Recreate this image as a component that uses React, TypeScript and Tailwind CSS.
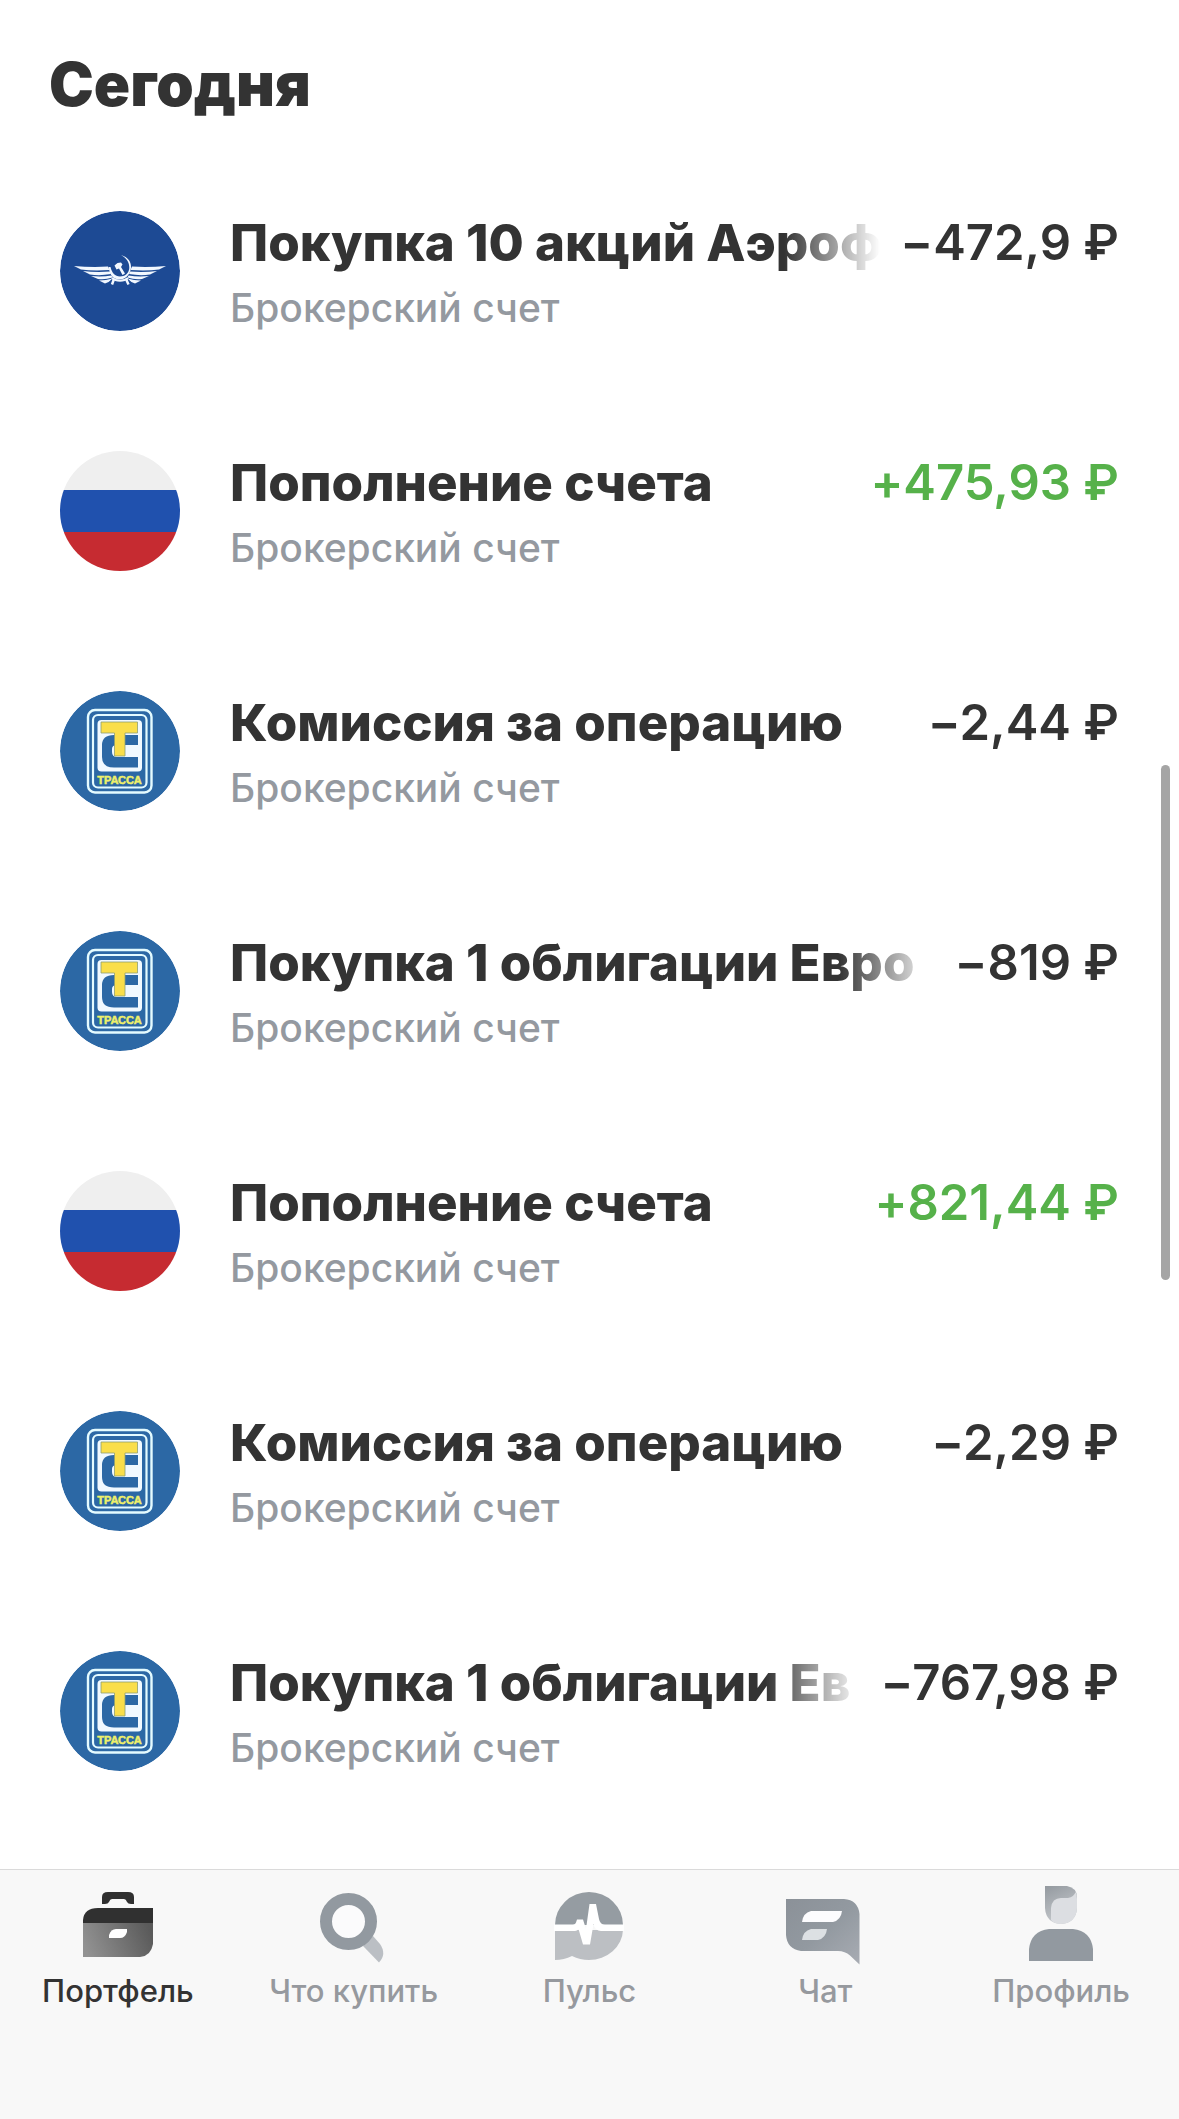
import type { ReactNode } from "react";

type Logo = "aeroflot" | "russia" | "trassa";

interface Operation {
  id: number;
  logo: Logo;
  title: string;
  account: string;
  amount: string;
  income?: boolean;
  faded?: boolean;
}

const operations: Operation[] = [
  { id: 1, logo: "aeroflot", title: "Покупка 10 акций Аэроф", account: "Брокерский счет", amount: "−472,9 ₽", faded: true },
  { id: 2, logo: "russia", title: "Пополнение счета", account: "Брокерский счет", amount: "+475,93 ₽", income: true },
  { id: 3, logo: "trassa", title: "Комиссия за операцию", account: "Брокерский счет", amount: "−2,44 ₽" },
  { id: 4, logo: "trassa", title: "Покупка 1 облигации Евро", account: "Брокерский счет", amount: "−819 ₽", faded: true },
  { id: 5, logo: "russia", title: "Пополнение счета", account: "Брокерский счет", amount: "+821,44 ₽", income: true },
  { id: 6, logo: "trassa", title: "Комиссия за операцию", account: "Брокерский счет", amount: "−2,29 ₽" },
  { id: 7, logo: "trassa", title: "Покупка 1 облигации Ев", account: "Брокерский счет", amount: "−767,98 ₽", faded: true },
];

function AeroflotLogo() {
  return (
    <svg viewBox="0 0 120 120" className="size-full" aria-hidden="true">
      <circle cx="60" cy="60" r="60" fill="#1d4a94" />
      <g fill="#f2f8ff">
        <path d="M14 55Q32 56.500 48 55.500L49.500 59Q33 60 21 58.500Z" />
        <path d="M23 60Q36 61.500 50 60.500L51 63Q40 65 30 63.500Z" />
        <path d="M31 65Q42 66 51.500 64.500L52.500 66.500Q45 69 38 68Z" />
        <path d="M39 69.500Q46 69.500 52.500 67.500Q49 71.500 45 72.500Z" />
        <path d="M106 55Q88 56.500 72 55.500L70.500 59Q87 60 99 58.500Z" />
        <path d="M97 60Q84 61.500 70 60.500L69 63Q80 65 90 63.500Z" />
        <path d="M89 65Q78 66 68.500 64.500L67.500 66.500Q75 69 82 68Z" />
        <path d="M81 69.500Q74 69.500 67.500 67.500Q71 71.500 75 72.500Z" />
        <path d="M61 44C68 46 71.500 51 71 57C70 64 65 68.500 59.500 68.500C54 68.500 50 65 48.500 56L50.500 56C52 62 55 65.500 60 65.500C65 65.500 69 62 69.300 57C69.500 51.500 66.500 47 61 44Z" />
        <path d="M54.500 54.500L57.500 52L61 51.500L62.500 53.500L61 56L65 62.500L62.500 64L59 57.500L56.500 58.500Z" />
      </g>
      <g fill="none" stroke="#f2f8ff">
        <path d="M52 67C56 70.500 64 70.500 68 67" strokeWidth="2" />
        <path d="M54 68L52 73.500M66 68L68.500 73.500" strokeWidth="2.500" />
      </g>
    </svg>
  );
}

function RussiaFlag() {
  return (
    <div className="flex size-full flex-col">
      <div className="h-[39px] bg-[#efefef]" />
      <div className="h-[42px] bg-[#2051ae]" />
      <div className="flex-1 bg-[#c62b31]" />
    </div>
  );
}

function TrassaLogo() {
  return (
    <svg viewBox="0 0 120 120" className="size-full" aria-hidden="true">
      <circle cx="60" cy="60" r="60" fill="#2c68a5" />
      <rect x="28" y="19" width="63.500" height="82.500" rx="7" fill="none" stroke="#e4fbff" strokeWidth="2.400" />
      <rect x="33" y="24" width="53.500" height="72.500" rx="5" fill="none" stroke="#e4fbff" strokeWidth="2.200" />
      <rect x="37.500" y="29" width="44.500" height="51.500" rx="4" fill="#f1f9ff" />
      <path d="M78 44H54Q42 44 42 54V66Q42 76.500 54 76.500H78V66H57Q52 66 52 61V58Q52 54 57 54H78Z" fill="#2c68a5" />
      <path d="M41 31H77.500V42H65V65H54.500V42H41Z" fill="#fade4a" stroke="#8e9f72" strokeWidth="0.800" />
      <text x="59.500" y="92.500" textAnchor="middle" fontFamily="Liberation Sans, sans-serif" fontWeight="700" fontSize="11" fill="#eef06a" stroke="#eef06a" strokeWidth="0.500">
        ТРАССА
      </text>
    </svg>
  );
}

function OperationLogo({ logo }: { logo: Logo }) {
  return (
    <div className="size-[120px] shrink-0 overflow-hidden rounded-full">
      {logo === "aeroflot" && <AeroflotLogo />}
      {logo === "russia" && <RussiaFlag />}
      {logo === "trassa" && <TrassaLogo />}
    </div>
  );
}

function OperationRow({ operation }: { operation: Operation }) {
  const fade = operation.faded
    ? "[mask-image:linear-gradient(to_left,transparent,black_96px)]"
    : "";
  return (
    <li className="flex h-[120px] gap-[50px]">
      <OperationLogo logo={operation.logo} />
      <div className="min-w-0 flex-1">
        <div className="flex gap-5 leading-[63px]">
          <h2 className={`min-w-0 flex-1 overflow-hidden text-[51px] font-extrabold whitespace-nowrap text-[#333333] ${fade}`}>
            {operation.title}
          </h2>
          <span className={`shrink-0 text-[49px] font-semibold [font-feature-settings:'calt'_0] ${operation.income ? "text-[#56b14a]" : "text-[#333333]"}`}>
            {operation.amount}
          </span>
        </div>
        <p className="text-[39px] leading-[67px] font-medium text-[#9499a0]">{operation.account}</p>
      </div>
    </li>
  );
}

function PortfolioIcon() {
  return (
    <svg viewBox="0 0 80 80" className="size-20" aria-hidden="true">
      <defs>
        <linearGradient id="case" x1="0" y1="0.600" x2="1" y2="0.400">
          <stop offset="0" stopColor="#929292" />
          <stop offset="1" stopColor="#5a5a5a" />
        </linearGradient>
      </defs>
      <path d="M24 17V10Q24 5 30 5H50Q56 5 56 10V17H53Q50 17 49 15Q48 12 46 12H34Q32 12 31 15Q30 17 27 17Z" fill="#303030" />
      <path d="M5 36V33Q6 21 20 21H75V36Z" fill="#303030" />
      <path d="M5 36H75V57Q73 69 62 70H5Z" fill="url(#case)" />
      <path d="M31 51V48Q33 42 38 42H49V45Q47 51 42 51Z" fill="#fff" />
    </svg>
  );
}

function SearchIcon() {
  return (
    <svg viewBox="0 0 80 80" className="size-20" aria-hidden="true">
      <path d="M49 59L59 49L66 57Q73 67 65 75.500Z" fill="#bbbfc4" />
      <circle cx="34.500" cy="34.500" r="22.500" fill="#fbfbfc" stroke="#9299a0" strokeWidth="12" />
    </svg>
  );
}

function PulseIcon() {
  return (
    <svg viewBox="0 0 80 80" className="size-20" aria-hidden="true">
      <path d="M6 38A34 33 0 0 1 74 38Z" fill="#959ca2" />
      <path d="M6 43H74A34 31 0 0 1 40 73Q31 73 23 69Q15 73 6 73Z" fill="#bcbfc3" />
      <path d="M5 37.500H24Q26.500 37.500 27 35.500L28 32.500H34L37 42L40.500 17H47L50 32Q51 37.500 56 37.500H75V44H52Q46 44 44.500 37L41 57.500H34L29.500 42Q28 44 26 44H5Z" fill="#fff" />
    </svg>
  );
}

function ChatIcon() {
  return (
    <svg viewBox="0 0 80 80" className="size-20" aria-hidden="true">
      <defs>
        <linearGradient id="bubble" x1="0" y1="0" x2="1" y2="1">
          <stop offset="0" stopColor="#8b9198" />
          <stop offset="0.500" stopColor="#9299a0" />
          <stop offset="1" stopColor="#a8acb3" />
        </linearGradient>
      </defs>
      <path d="M1 12H59Q73 13 74.500 27V77.500L65 68.500Q60 64 53 64H16Q2 62 1 48Z" fill="url(#bubble)" />
      <path d="M17 35Q18 26 26 24H57Q56 33 48 35Z" fill="#fcfcfe" />
      <path d="M17 53Q18 44 26 42H42Q41 51 33 53Z" fill="#dce0e3" />
    </svg>
  );
}

function ProfileIcon() {
  return (
    <svg viewBox="0 0 80 80" className="size-20" aria-hidden="true">
      <defs>
        <linearGradient id="hair" x1="0" y1="0" x2="0.400" y2="1">
          <stop offset="0" stopColor="#93999f" />
          <stop offset="1" stopColor="#c6c9cd" />
        </linearGradient>
      </defs>
      <path d="M24 -1H46Q56 1 56 10V21Q55 36 40 37Q25 36 24 21Z" fill="url(#hair)" />
      <path d="M30 33V21Q31 11 40 11H47Q53 10 54.500 5Q56 8 56 12V21Q55 36 40 37Q33 37 30 33Z" fill="#dcdee2" />
      <path d="M8 74V62Q10 44 28 42H52Q70 44 72 62V74Z" fill="#9299a0" />
    </svg>
  );
}

const tabs: { label: string; icon: ReactNode; active?: boolean }[] = [
  { label: "Портфель", icon: <PortfolioIcon />, active: true },
  { label: "Что купить", icon: <SearchIcon /> },
  { label: "Пульс", icon: <PulseIcon /> },
  { label: "Чат", icon: <ChatIcon /> },
  { label: "Профиль", icon: <ProfileIcon /> },
];

export default function App() {
  return (
    <div className="relative flex min-h-screen flex-col bg-white font-[Inter,sans-serif]">
      <main className="flex-1 pt-12 pr-[60px] pl-[49px]">
        <h1 className="text-[60px] leading-[72px] font-black text-[#333333]">Сегодня</h1>
        <ul className="mt-[91px] flex flex-col gap-[120px] pl-[11px]">
          {operations.map((operation) => (
            <OperationRow key={operation.id} operation={operation} />
          ))}
        </ul>
      </main>
      <div className="absolute top-[765px] right-[9px] h-[515px] w-[9px] rounded-full bg-[#a5a5a5]" />
      <nav className="grid h-[250px] grid-cols-5 border-t border-[#dadada] bg-[#f8f8f8]">
        {tabs.map((tab) => (
          <button
            key={tab.label}
            type="button"
            aria-current={tab.active ? "page" : undefined}
            className={`flex flex-col items-center pt-[17px] text-[31px] leading-10 font-medium whitespace-nowrap ${tab.active ? "text-[#333333]" : "text-[#96999e]"}`}
          >
            <span className="[&>svg]:overflow-visible">{tab.icon}</span>
            <span className="mt-1">{tab.label}</span>
          </button>
        ))}
      </nav>
    </div>
  );
}
